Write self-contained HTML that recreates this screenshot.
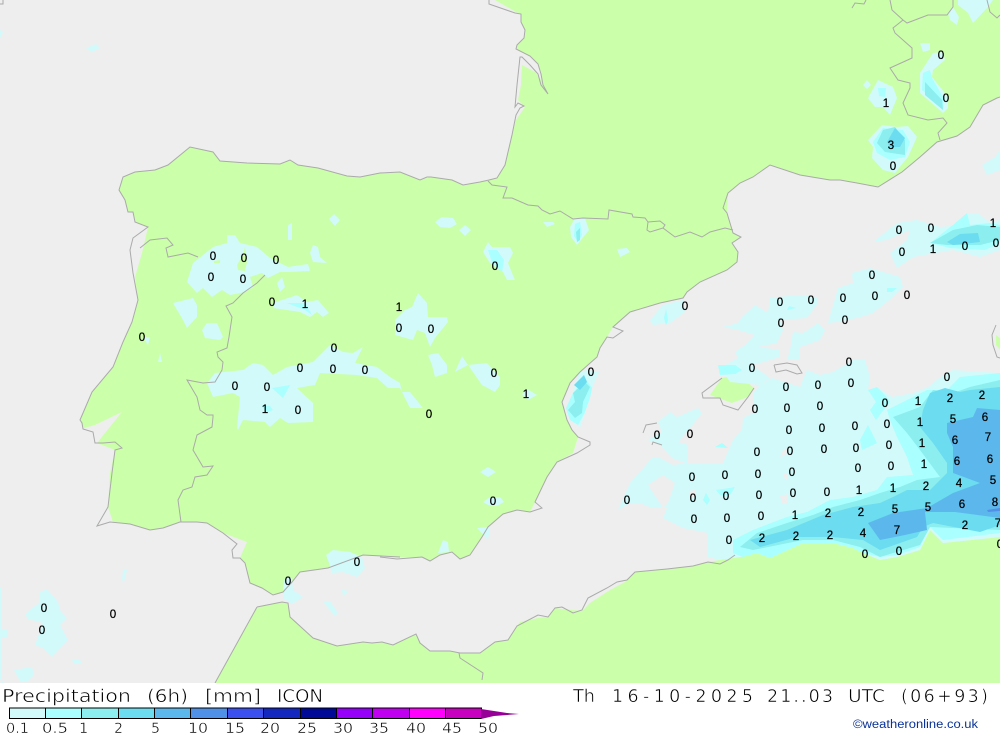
<!DOCTYPE html>
<html><head><meta charset="utf-8"><title>Precipitation</title>
<style>
html,body{margin:0;padding:0;background:#fff;width:1000px;height:733px;overflow:hidden}
svg{display:block}
.l{fill:#ccffaa}
.a{fill:#d2fafa}.b{fill:#aaffff}.c{fill:#8ceeee}.d{fill:#6cdcf0}.e{fill:#5cb8ec}.f{fill:#5090e8}
.o{fill:none;stroke:#aaaaaa;stroke-width:1}
.n text{font:11.5px "Liberation Sans",sans-serif;fill:#000;stroke:#000;stroke-width:.25;text-anchor:middle;dominant-baseline:central}
.k text{font:14.5px "DejaVu Sans",sans-serif;fill:#000;stroke:#fff;stroke-width:.45}
.t text{font-family:"DejaVu Sans",sans-serif;font-size:17.5px;fill:#000;stroke:#fff;stroke-width:.55}
</style></head><body>
<svg width="1000" height="733" viewBox="0 0 1000 733" xmlns="http://www.w3.org/2000/svg">
<rect width="1000" height="683" fill="#eeeeee"/>
<!-- land -->
<path class="l" d="M495,0 516,12 521,14 521,22 525,30 524,38 517,45 517,50 531,57 538,64 541,72 543,85 548,94 541,80 535,72 522,65 521,85 518,100 525,107 516,120 512,135 505,165 497,178 480,182 463,185 452,180 431,177 420,180 400,172 380,173 360,177 347,176 318,168 298,165 290,160 280,164 247,163 220,161 213,152 190,147 168,165 155,170 135,172 123,177 119,190 125,200 128,212 133,212 135,222 148,227 142,253 135,277 138,300 132,322 123,342 113,367 92,392 80,420 84,428 95,425 122,412 97,443 115,450 110,473 108,507 113,522 130,524 150,530 163,528 180,522 197,522 207,523 223,533 247,542 240,558 245,563 250,583 262,588 273,595 283,592 292,582 300,572 328,568 363,555 400,557 422,557 430,561 440,555 452,552 460,559 470,555 482,537 488,527 503,514 517,510 530,512 535,502 547,477 557,462 573,453 578,437 572,430 567,420 562,402 570,383 580,372 597,357 600,348 607,337 613,327 630,312 660,303 683,298 687,292 700,282 727,270 737,262 738,252 732,243 741,237 733,233 727,213 728,193 740,183 753,177 770,165 800,175 830,180 840,180 857,183 878,187 902,172 920,157 937,142 957,136 970,127 983,105 997,98 1000,97 1000,0Z"/>
<path class="l" d="M257,607 282,602 288,603 290,617 313,638 337,646 363,642 372,643 382,642 393,645 416,634 420,643 430,651 450,651 460,653 480,653 495,642 508,640 520,622 538,618 548,617 555,608 562,609 582,611 590,603 610,590 625,582 635,572 667,569 693,566 708,562 720,560 740,557 757,553 770,558 803,543 833,543 853,548 863,553 880,560 897,557 920,550 930,530 943,543 1000,537 1000,683 215,683Z"/>
<path class="l" d="M722,378 733,376 747,382 754,388 748,397 732,403 710,395Z"/>
<path class="l" d="M996,335 1000,338 1000,350 996,345Z"/>
<!-- precip light -->
<g class="a">
<path d="M708,557 708,533 683,528 663,518 667,508 652,508 640,503 630,503 618,510 627,490 630,483 640,472 652,458 660,458 673,465 687,463 688,445 678,442 690,428 702,413 698,408 677,417 670,412 658,422 662,432 648,440 660,445 672,458 688,464 723,463 733,440 742,430 743,418 755,412 753,393 760,385 772,378 800,387 807,370 820,375 833,372 853,360 865,360 870,377 868,390 877,387 892,397 913,393 928,387 943,375 953,370 983,372 1000,373 1000,537 943,543 930,530 920,550 897,557 880,560 863,553 853,548 833,543 803,543 770,558 757,553 740,557 720,560ZM648,485 663,475 675,483 668,503 663,508Z" fill-rule="evenodd"/>
<path d="M650,320 663,305 683,300 685,312 670,323 653,325Z"/>
<path d="M723,327 738,323 742,317 755,305 768,313 770,298 797,295 817,297 818,303 807,318 780,320 783,330 777,343 758,347 780,350 780,357 760,363 752,365 770,378 760,385 730,382 722,370 725,365 738,358 735,352 745,345 755,335 738,330Z"/>
<path d="M790,350 793,332 803,333 818,323 825,330 820,340 800,347 800,360 787,360Z"/>
<path d="M828,323 838,288 853,283 852,273 870,268 900,277 903,287 893,297 873,313 857,318 837,322Z"/>
<path d="M873,242 897,223 917,220 940,227 960,225 967,213 978,213 990,223 1000,220 1000,250 980,257 953,250 913,257 897,268 890,253 907,240 910,230 887,240Z"/>
<path d="M187,282 193,263 213,247 227,243 227,235 235,235 240,243 257,247 270,258 288,267 308,264 310,271 290,272 280,272 268,278 262,273 250,277 253,287 245,292 230,295 222,290 212,297 203,288 197,293Z"/>
<path d="M173,303 193,298 197,305 197,317 187,328 183,320Z"/>
<path d="M202,330 207,323 217,323 223,337 220,340 205,338Z"/>
<path d="M313,245 318,247 320,257 327,263 313,262 310,253Z"/>
<path d="M277,283 282,277 285,287 280,292Z"/>
<path d="M273,303 297,295 307,302 318,300 329,313 323,317 317,312 310,317 300,312 273,308Z"/>
<path d="M288,225 292,223 292,240 288,240Z"/>
<path d="M329,219 334,214 340,220 335,226Z"/>
<path d="M207,383 215,373 243,370 253,363 263,365 273,375 287,367 313,362 330,345 343,352 353,353 363,347 355,363 377,367 390,377 400,383 402,392 410,392 423,408 410,408 400,388 388,388 377,378 357,375 320,373 315,385 297,388 313,403 313,422 288,423 280,418 270,427 265,422 243,420 238,430 237,428 240,397 233,393 213,397Z"/>
<path d="M395,335 395,320 405,310 412,307 418,293 427,303 428,317 447,317 448,322 435,338 430,347 425,333 417,330 413,340Z"/>
<path d="M428,355 438,353 447,365 447,373 435,377 432,365Z"/>
<path d="M455,372 462,356 468,365 487,363 500,377 500,385 495,392 482,385 468,365Z"/>
<path d="M522,394 527,389 537,395 528,400Z"/>
<path d="M480,472 488,467 496,472 488,477Z"/>
<path d="M483,502 490,497 500,497 504,502 497,506 488,505Z"/>
<path d="M477,528 490,527 488,540Z"/>
<path d="M438,553 443,540 448,542 449,552Z"/>
<path d="M579,372 587,370 599,372 590,393 585,413 580,428 570,417 567,407 573,392Z"/>
<path d="M570,227 575,218 585,218 589,230 577,245 571,237Z"/>
<path d="M435,222 442,217 453,218 457,224 450,228 440,227Z"/>
<path d="M459,230 465,225 471,230 465,236Z"/>
<path d="M543,222 553,222 555,224 547,227Z"/>
<path d="M617,249 627,248 630,252 620,257Z"/>
<path d="M483,252 488,242 492,247 510,247 513,253 508,263 512,273 515,280 507,280 503,272 490,263Z"/>
<path d="M326,555 333,550 350,552 362,557 365,568 357,577 343,572 332,573 329,563Z"/>
<path d="M285,578 292,578 293,590 303,597 292,604 283,598 283,587Z"/>
<path d="M323,602 330,601 338,613 335,616Z"/>
<path d="M342,590 349,591 343,596Z"/>
<path d="M143,337 150,337 148,345Z"/><path d="M158,362 160,353 162,362Z"/>
<path d="M868,98 878,80 893,87 897,98 890,115 883,107 875,107Z"/>
<path d="M863,85 867,80 871,85 867,89Z"/>
<path d="M868,140 882,125 897,127 908,126 917,137 908,157 903,163 895,173 883,170 872,158 873,147Z"/>
<path d="M920,73 933,53 943,52 945,60 933,70 932,77 948,97 948,108 943,113 920,93Z"/>
<path d="M920,43 930,43 930,50 923,52Z"/>
<path d="M948,13 953,7 959,17 957,25 950,20Z"/>
<path d="M958,0 993,0 988,7 973,23 968,13 958,5Z"/>
<path d="M982,165 995,157 1000,150 1000,170 987,175Z"/>
<path d="M39,593 47,589 58,602 60,610 67,618 60,625 68,640 52,657 43,648 35,645 43,623 28,619 25,614 40,602Z"/>
<path d="M14,670 32,667 34,675 28,681 20,681Z"/>
<path d="M72,660 80,660 82,663 74,664Z"/>
<path d="M123,570 127,570 124,582 122,580Z"/>
<path d="M0,630 8,630 8,637 0,638Z"/>
<path d="M0,588 2,588 2,680 0,680Z"/>
<path d="M0,682 4,680 4,683Z"/>
<path d="M86,48 96,44 100,48 92,52Z"/>
<path d="M0,30 3,32 0,38Z"/>
</g>
<path class="l" d="M237,265 243,255 245,247 247,262 245,271 238,270Z"/>
<path class="l" d="M214,261 220,260 220,263 214,263Z"/>
<path d="M783,450 788,448 786,455 780,457Z" fill="#eeeeee"/>
<path d="M784,473 788,473 788,480 784,478Z" fill="#eeeeee"/>
<path d="M780,496 788,494 788,503 782,503Z" fill="#eeeeee"/>
<path d="M690,491 695,490 695,498 690,496Z" fill="#eeeeee"/>
<!-- level b -->
<g class="b">
<path d="M1000,373 960,377 947,390 927,390 907,400 887,410 890,420 897,437 907,457 913,475 887,477 877,490 853,497 830,500 807,512 787,517 753,530 733,540 733,553 743,557 757,553 770,558 803,543 833,543 853,548 863,553 880,557 897,555 920,547 930,527 943,540 1000,533Z"/>
<path d="M876,402 868,390 877,387 885,395 890,402 882,412 876,420 870,410Z"/>
<path d="M860,440 868,425 877,443 862,450Z"/>
<path d="M718,365 735,365 742,370 735,374 720,375Z"/>
<path d="M715,447 722,443 728,448Z"/>
<path d="M716,490 730,488 735,487 730,495 720,495Z"/>
<path d="M706,493 710,500 707,505 703,500Z"/>
<path d="M573,393 585,378 592,388 590,398 585,412 578,425 570,420 566,408Z"/>
<path d="M488,250 497,250 504,260 502,272 492,262Z"/>
<path d="M575,224 580,222 582,235 578,242 574,236Z"/>
<path d="M272,388 290,385 283,398Z"/>
<path d="M262,406 270,406 273,410 266,413Z"/>
<path d="M287,303 305,303 312,315 305,310Z"/>
<path d="M878,88 886,88 885,97 879,96Z"/>
<path d="M873,142 883,128 903,130 910,142 905,157 890,160 877,153Z"/>
<path d="M923,73 930,70 932,78 943,97 943,108 922,90Z"/>
<path d="M930,243 953,225 967,213 970,225 990,223 1000,225 1000,243 985,250 950,248Z"/>
<path d="M789,306 796,308 787,310Z"/><path d="M887,288 897,288 892,292 887,292Z"/>
<path d="M666,309 668,320 666,325 664,318Z"/>
</g>
<!-- level c -->
<g class="c">
<path d="M1000,380 970,387 953,393 933,390 920,407 893,417 907,433 920,450 940,477 917,480 900,487 880,493 860,500 833,507 813,515 787,523 757,533 740,547 753,550 803,540 833,540 860,547 880,557 920,545 930,527 1000,530Z"/>
<path d="M573,393 585,382 590,387 583,402 582,413 575,418 568,410 575,402Z"/>
<path d="M877,143 883,130 895,127 905,140 905,155 885,152Z"/>
<path d="M925,82 942,100 943,110 925,95Z"/>
<path d="M576,232 580,228 580,240 577,242Z"/>
<path d="M930,243 953,230 977,225 1000,227 1000,240 980,245 947,245Z"/>
</g>
<!-- level d -->
<g class="d">
<path d="M1000,387 970,390 960,392 945,388 930,393 923,410 920,427 933,443 947,463 947,473 930,490 907,490 893,497 880,503 853,507 823,515 787,530 750,540 760,547 797,537 833,537 863,540 880,550 917,537 923,527 933,523 980,532 1000,525Z"/>
<path d="M574,385 584,375 587,382 580,390Z"/>
<path d="M887,142 895,128 905,138 900,147 890,147Z"/>
<path d="M947,242 960,234 978,233 980,242 953,245Z"/>
</g>
<!-- level e -->
<path class="e" d="M1000,410 977,408 973,417 947,423 947,433 953,447 953,473 980,483 953,493 927,508 893,513 868,523 880,540 905,535 927,530 925,512 955,512 1000,518Z"/>
<path class="f" d="M987,510 1000,508 1000,511 988,512Z"/>
<!-- outlines -->
<g class="o">
<path d="M489,0 489,4 515,13 521,14 521,22 525,30 524,38 517,45 516,49 530,56 538,64 541,74 543,85 548,94 541,85 538,74 530,65 522,57 520,57 517,85 515,107 518,103 524,106 520,108 516,115 512,135 505,165 497,178 489,180 480,182 463,185 452,180 431,177 427,177 420,180 400,172 380,173 360,177 347,176 318,168 298,165 290,160 280,164 247,163 220,161 213,152 190,147 168,165 155,170 135,172 123,177 119,190 125,200 128,212 133,212 135,222 148,227 133,238 130,250 133,273 138,300 132,322 123,342 113,367 92,392 80,420 82,423 83,429 93,432 95,443 103,443 115,442 122,448 115,450 112,473 108,507 97,526 110,522 130,524 150,530 163,528 180,522 197,522 207,523 223,533 237,544 232,550 233,558 240,558 245,563 250,583 262,588 273,595 283,592 292,582 300,572 328,568 363,555 400,557"/>
<path d="M380,557 397,559 422,557 430,561 440,555 452,552 460,559 470,555 482,537 488,527 503,514 517,510 530,512 542,508 535,502 547,477 557,462 577,453 590,445 590,442 578,437 572,430 567,420 562,402 570,383 580,372 597,357 600,348 607,337 613,338 623,331 613,327 630,312 660,303 683,298 687,292 700,282 727,270 737,262 738,252 732,243 741,237 733,233 727,213 723,208 728,193 740,183 753,177 770,165 800,175 830,180 840,180"/>
<path d="M840,180 857,183 878,187 902,172 920,157 937,142 957,136 970,127 983,105 997,98 1000,97"/>
<path d="M488,181 492,185 507,187 503,198 512,198 528,205 538,206 542,210 550,214 560,211 573,219 583,218 608,219 609,210 632,214 633,217 645,218 648,222 660,221 665,225 663,228 675,237 690,232 702,237 710,232 725,228 733,230"/>
<path d="M648,222 647,230 650,232 663,228"/>
<path d="M198,257 188,253 168,257 166,248 173,245 167,238 150,240 140,248"/>
<path d="M265,275 257,283 243,293 233,303 226,306 232,317 229,337 227,348 217,352 218,357 223,362 222,370 215,382 203,383 187,380 197,397 200,410 207,415 213,415 213,417 212,427 197,435 193,450 203,467 213,466 207,475 195,477 192,487 183,490 178,500 181,522"/>
<path d="M257,607 282,602 288,603 290,617 313,638 337,646 363,642 372,643 382,642 393,645 416,634 420,643 430,651 450,651 460,653 480,653 495,642 508,640 517,626 538,615 548,617 555,608 562,607 573,613 582,610 588,598 607,588 617,582 627,580 635,572 667,569 693,566 708,562 720,564 728,560 735,555"/>
<path d="M257,607 215,683"/>
<path d="M459,653 460,658 483,673 482,680"/>
<path d="M722,378 702,393 703,398 720,398 723,405 738,410 748,397 754,388"/>
<path d="M774,365 776,372 786,370 797,374 802,373 797,365 787,363 774,365"/>
<path d="M643,433 646,425 657,423M652,445 653,442 662,445"/>
<path d="M890,0 892,10 903,20 907,23 928,15 947,15 953,7 953,0"/>
<path d="M903,20 893,28 895,33 912,48 912,58 890,68 898,80 910,83 910,88 903,103 908,115 928,120 943,118 947,123 938,133 940,140"/>
<path d="M987,0 990,12 997,18 1000,15"/>
<path d="M852,8 855,3 864,4 866,0"/>
<path d="M996,325 992,335 993,345 997,357 1000,358"/>
<path d="M0,4 3,4 3,0"/>
</g>
<!-- numeric labels -->
<g class="n">
<text x="213" y="257">0</text><text x="244" y="259">0</text><text x="276" y="261">0</text><text x="211" y="278">0</text><text x="243" y="280">0</text><text x="272" y="303">0</text><text x="305" y="305">1</text><text x="142" y="338">0</text><text x="399" y="308">1</text><text x="399" y="329">0</text><text x="431" y="330">0</text><text x="334" y="349">0</text><text x="300" y="369">0</text><text x="333" y="370">0</text><text x="365" y="371">0</text><text x="494" y="374">0</text><text x="235" y="387">0</text><text x="267" y="388">0</text><text x="265" y="410">1</text><text x="298" y="411">0</text><text x="429" y="415">0</text><text x="526" y="395">1</text><text x="591" y="373">0</text><text x="495" y="267">0</text><text x="493" y="502">0</text><text x="357" y="563">0</text><text x="288" y="582">0</text><text x="44" y="609">0</text><text x="42" y="631">0</text><text x="113" y="615">0</text>
<text x="685" y="307">0</text><text x="780" y="303">0</text><text x="811" y="301">0</text><text x="843" y="299">0</text><text x="875" y="297">0</text><text x="907" y="296">0</text><text x="872" y="276">0</text><text x="781" y="324">0</text><text x="845" y="321">0</text><text x="752" y="369">0</text><text x="849" y="363">0</text><text x="786" y="388">0</text><text x="818" y="386">0</text><text x="851" y="384">0</text><text x="947" y="378">0</text><text x="885" y="404">0</text><text x="918" y="402">1</text><text x="950" y="399">2</text><text x="982" y="396">2</text>
<text x="755" y="410">0</text><text x="787" y="409">0</text><text x="820" y="407">0</text><text x="657" y="436">0</text><text x="690" y="435">0</text><text x="789" y="431">0</text><text x="822" y="429">0</text><text x="855" y="427">0</text><text x="887" y="425">0</text><text x="920" y="423">1</text><text x="953" y="420">5</text><text x="985" y="418">6</text>
<text x="757" y="453">0</text><text x="790" y="452">0</text><text x="824" y="450">0</text><text x="856" y="449">0</text><text x="889" y="446">0</text><text x="922" y="444">1</text><text x="955" y="441">6</text><text x="988" y="438">7</text>
<text x="725" y="476">0</text><text x="758" y="475">0</text><text x="792" y="473">0</text><text x="858" y="469">0</text><text x="891" y="467">0</text><text x="924" y="465">1</text><text x="957" y="462">6</text><text x="990" y="460">6</text>
<text x="692" y="478">0</text><text x="693" y="499">0</text><text x="726" y="497">0</text><text x="759" y="496">0</text><text x="793" y="494">0</text><text x="827" y="493">0</text><text x="859" y="491">1</text><text x="893" y="489">1</text><text x="926" y="487">2</text><text x="959" y="484">4</text><text x="993" y="481">5</text>
<text x="627" y="501">0</text><text x="694" y="520">0</text><text x="727" y="519">0</text><text x="761" y="517">0</text><text x="795" y="516">1</text><text x="828" y="514">2</text><text x="861" y="513">2</text><text x="895" y="510">5</text><text x="928" y="508">5</text><text x="962" y="505">6</text><text x="995" y="503">8</text>
<text x="729" y="541">0</text><text x="762" y="539">2</text><text x="796" y="537">2</text><text x="830" y="536">2</text><text x="863" y="534">4</text><text x="897" y="531">7</text><text x="965" y="526">2</text><text x="998" y="524">7</text><text x="1000" y="545">0</text><text x="865" y="555">0</text><text x="899" y="552">0</text>
<text x="899" y="231">0</text><text x="931" y="229">0</text><text x="993" y="224">1</text><text x="902" y="253">0</text><text x="933" y="250">1</text><text x="965" y="247">0</text><text x="996" y="244">0</text>
<text x="941" y="56">0</text><text x="946" y="99">0</text><text x="886" y="104">1</text><text x="891" y="146">3</text><text x="893" y="167">0</text>
</g>
<!-- footer -->
<rect y="683" width="1000" height="50" fill="#fff"/>
<g class="t">
<text x="2" y="702" textLength="129" lengthAdjust="spacingAndGlyphs">Precipitation</text>
<text x="147" y="702" textLength="41" lengthAdjust="spacingAndGlyphs">(6h)</text>
<text x="205" y="702" textLength="56" lengthAdjust="spacingAndGlyphs">[mm]</text>
<text x="277" y="702" textLength="46" lengthAdjust="spacingAndGlyphs">ICON</text>
<text x="573" y="702" textLength="22" lengthAdjust="spacingAndGlyphs">Th</text>
<text x="612" y="702" textLength="141" lengthAdjust="spacing">16-10-2025</text>
<text x="767" y="702" textLength="66" lengthAdjust="spacing">21..03</text>
<text x="848" y="702" textLength="37" lengthAdjust="spacingAndGlyphs">UTC</text>
<text x="901" y="702" textLength="87" lengthAdjust="spacing">(06+93)</text>
</g>
<g stroke="#000" stroke-width="1">
<rect x="9.5" y="708" width="36" height="10.5" fill="#d2fafa"/>
<rect x="45.5" y="708" width="36" height="10.5" fill="#aaffff"/>
<rect x="81.5" y="708" width="37" height="10.5" fill="#8ceeee"/>
<rect x="118.5" y="708" width="36" height="10.5" fill="#6cdcf0"/>
<rect x="154.5" y="708" width="36" height="10.5" fill="#5cb8ec"/>
<rect x="190.5" y="708" width="37" height="10.5" fill="#5090e8"/>
<rect x="227.5" y="708" width="36" height="10.5" fill="#3c50f0"/>
<rect x="263.5" y="708" width="37" height="10.5" fill="#1428c0"/>
<rect x="300.5" y="708" width="36" height="10.5" fill="#000a96"/>
<rect x="336.5" y="708" width="36" height="10.5" fill="#9600fa"/>
<rect x="372.5" y="708" width="37" height="10.5" fill="#c000f0"/>
<rect x="409.5" y="708" width="36" height="10.5" fill="#ff00ff"/>
<rect x="445.5" y="708" width="36" height="10.5" fill="#c800c0"/>
</g>
<path d="M481,709 494,711 507,713 519,714 507,715 494,716 481,719Z" fill="#960096"/>
<g class="k">
<text x="6" y="733" textLength="23" lengthAdjust="spacingAndGlyphs">0.1</text><text x="42" y="733" textLength="26" lengthAdjust="spacingAndGlyphs">0.5</text><text x="79" y="733">1</text><text x="114" y="733" textLength="9" lengthAdjust="spacingAndGlyphs">2</text><text x="151" y="733" textLength="9" lengthAdjust="spacingAndGlyphs">5</text><text x="188" y="733" textLength="20" lengthAdjust="spacingAndGlyphs">10</text><text x="225" y="733" textLength="20" lengthAdjust="spacingAndGlyphs">15</text><text x="260" y="733" textLength="20" lengthAdjust="spacingAndGlyphs">20</text><text x="297" y="733" textLength="20" lengthAdjust="spacingAndGlyphs">25</text><text x="333" y="733" textLength="20" lengthAdjust="spacingAndGlyphs">30</text><text x="369" y="733" textLength="20" lengthAdjust="spacingAndGlyphs">35</text><text x="406" y="733" textLength="20" lengthAdjust="spacingAndGlyphs">40</text><text x="442" y="733" textLength="20" lengthAdjust="spacingAndGlyphs">45</text><text x="478" y="733" textLength="20" lengthAdjust="spacingAndGlyphs">50</text>
</g>
<text x="853" y="728" font-family="Liberation Sans, sans-serif" font-size="11.5" fill="#0a3296" textLength="125" lengthAdjust="spacingAndGlyphs">©weatheronline.co.uk</text>
</svg>
</body></html>
